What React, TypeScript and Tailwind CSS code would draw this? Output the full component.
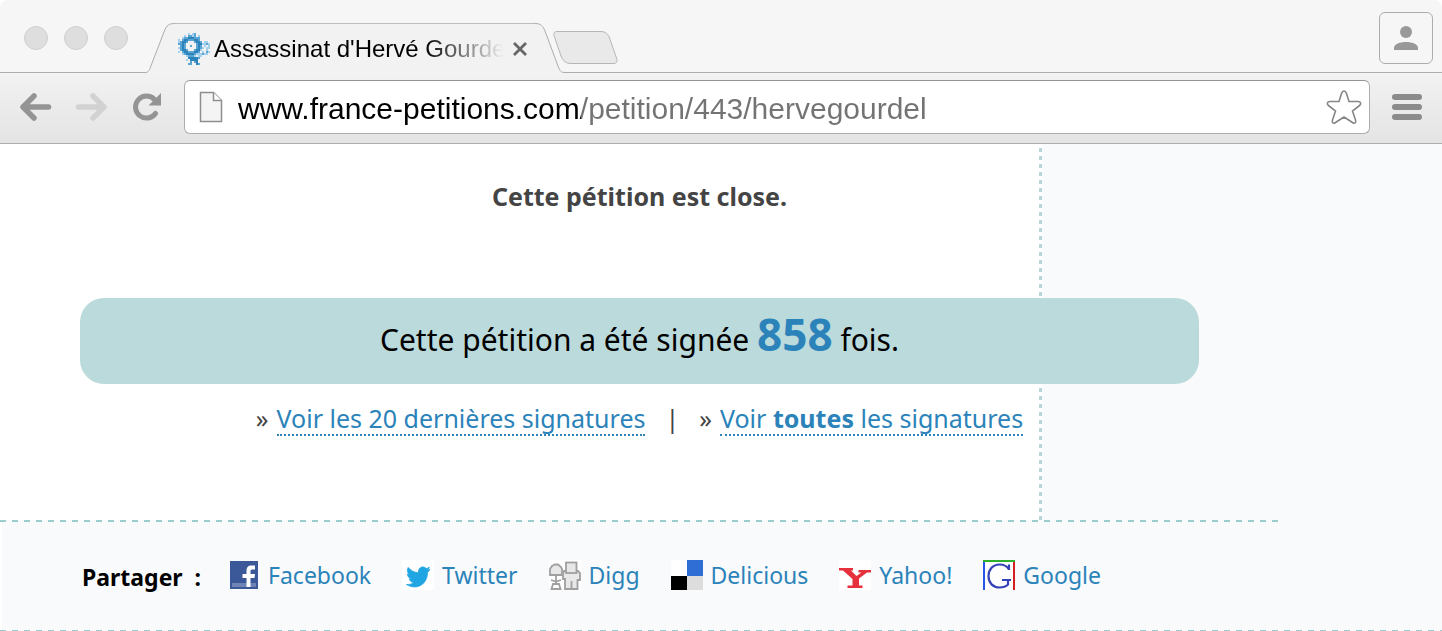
import type { ReactNode } from 'react'

const favicon = [
  '.....a.ab.......',
  '...a.bbab.a.....',
  '..abbcccbbb.....',
  'a.bccbbbccb.....',
  'abccb...bccb.aa.',
  'bbcb.....bccaaba',
  '.bcb..b..bcb.a.a',
  'abcb.....bcba.aa',
  '.bccb...bcca..a.',
  'a.bccbbbccb.a.ba',
  '..abccccbaaabaa.',
  '....abbba.aa....',
  '.....cccccb.....',
  '....a.cccc......',
  '......b.bc......',
  '.....bb..cb.....',
]

const shades: Record<string, string> = { a: '#a3d0ec', b: '#5aa5d3', c: '#2b83ba' }

function Favicon() {
  return (
    <svg viewBox="0 0 16 16" className="size-8 shrink-0" shapeRendering="crispEdges" aria-hidden="true">
      {favicon.flatMap((row, y) =>
        row.split('').map((c, x) =>
          shades[c] ? <rect key={`${x}-${y}`} x={x} y={y} width="1" height="1" fill={shades[c]} /> : null
        )
      )}
    </svg>
  )
}

function TabStrip() {
  return (
    <div className="flex h-[73px] items-end rounded-t-lg border-b border-[#adadad] bg-[#f6f6f6]">
      <div className="flex gap-4 self-start pt-[26px] pl-6">
        {['Fermer', 'Réduire', 'Agrandir'].map((name) => (
          <button key={name} aria-label={name} className="size-6 rounded-full border border-[#cfcfcf] bg-[#dedede]" />
        ))}
      </div>

      <div className="-mb-px ml-[17px] flex h-[50px] shrink-0">
        <svg viewBox="0 0 30 50" className="h-[50px] w-[30px]" aria-hidden="true">
          <path d="M0 50V49.500C3 49.500 4 48 5.500 44L19 9C21.500 2 24 .5 30 .5V50Z" fill="#f2f2f2" />
          <path d="M0 49.500C3 49.500 4 48 5.500 44L19 9C21.500 2 24 .5 30 .5" fill="none" stroke="#adadad" />
        </svg>
        <div className="flex w-[360px] items-center border-t border-[#bdbdbd] bg-[#f2f2f2] pl-[3px]">
          <Favicon />
          <span className="ml-1 w-[294px] text-2xl whitespace-nowrap text-black [mask-image:linear-gradient(to_right,black_210px,transparent_290px)]">
            Assassinat d'Hervé Gourde
          </span>
          <button aria-label="Fermer l'onglet" className="ml-[5px]">
            <svg viewBox="0 0 14 14" className="size-3.5" aria-hidden="true">
              <path d="M1 1L13 13M13 1L1 13" stroke="#666" strokeWidth="2.800" />
            </svg>
          </button>
        </div>
        <svg viewBox="0 0 30 50" className="h-[50px] w-[30px]" aria-hidden="true">
          <path d="M0 .5C6 .5 8 3 10 8L23 43C25 48 26 49.500 30 49.500V50H0Z" fill="#f2f2f2" />
          <path d="M0 .5C6 .5 8 3 10 8L23 43C25 48 26 49.500 30 49.500" fill="none" stroke="#adadad" />
        </svg>
      </div>
      <button aria-label="Nouvel onglet" className="mb-2 -ml-3">
        <svg viewBox="0 0 65 33" className="h-[33px] w-[65px]" aria-hidden="true">
          <path
            d="M4 .5H47C53 .5 55 3 56.500 7L63.500 27C65 30 63.500 32.500 61 32.500H18C13 32.500 10 30 8 25L1.500 6C0 2 1.500 .5 4 .5Z"
            fill="#e9e9e9"
            stroke="#b5b5b5"
          />
        </svg>
      </button>

      <button
        aria-label="Profil"
        className="mr-[9px] mb-2 ml-auto flex h-[52px] w-[54px] items-center justify-center rounded-md border border-[#adadad]"
      >
        <svg viewBox="0 0 24 24" className="size-6" fill="#999" aria-hidden="true">
          <circle cx="12" cy="6" r="6" />
          <path d="M0 24V22C0 18 6 16 12 16S24 18 24 22V24Z" />
        </svg>
      </button>
    </div>
  )
}

function Toolbar() {
  return (
    <div className="flex h-[71px] items-center border-b border-[#adadad] bg-linear-to-b from-[#f2f2f2] to-[#e4e4e4] px-5 pb-0.5">
      <button aria-label="Précédent">
        <svg viewBox="0 0 32 28" className="h-7 w-8" aria-hidden="true">
          <path d="M14 3L3 14L14 25M3.500 14H28.500" fill="none" stroke="#949494" strokeWidth="5.500" strokeLinecap="round" strokeLinejoin="round" />
        </svg>
      </button>
      <button aria-label="Suivant" className="ml-[23px]">
        <svg viewBox="0 0 32 28" className="h-7 w-8" aria-hidden="true">
          <path d="M18 3L29 14L18 25M28.500 14H3.500" fill="none" stroke="#d2d2d2" strokeWidth="5.500" strokeLinecap="round" strokeLinejoin="round" />
        </svg>
      </button>
      <button aria-label="Actualiser" className="ml-[26px]">
        <svg viewBox="0 0 29 28" className="h-7 w-[29px]" aria-hidden="true">
          <path d="M22.500 20.500A11 11 0 1 1 21.500 6.500" fill="none" stroke="#949494" strokeWidth="5" strokeLinecap="round" />
          <path d="M28 0V12.500H15.500Z" fill="#949494" />
        </svg>
      </button>

      <div className="ml-[22px] flex h-[54px] flex-1 items-center rounded-md border border-[#adadad] border-t-[#949494] bg-white pr-[7px] pl-3.5">
        <svg viewBox="0 0 24 32" className="h-8 w-6 shrink-0" aria-hidden="true">
          <path d="M1.500 1.500H14.500L22.500 9.500V30.500H1.500Z" fill="#f4f4f4" stroke="#8e8e8e" strokeWidth="1.500" />
          <path d="M14.500 1.500V9.500H22.500" fill="#fff" stroke="#8e8e8e" strokeWidth="1.500" />
        </svg>
        <input
          type="text"
          aria-label="Adresse"
          defaultValue="www.france-petitions.com/petition/443/hervegourdel"
          className="ml-[15px] min-w-0 flex-1 bg-linear-to-r from-black from-[343px] to-[#737373] to-[343px] bg-clip-text pt-0.5 text-[30px] text-transparent outline-none"
        />
        <button aria-label="Ajouter aux favoris">
          <svg viewBox="0 0 36 36" className="size-9" aria-hidden="true">
            <path
              d="M18 2C19.500 2 20 3 20.500 4.500L23 12.500H32C35 12.500 35.500 15 33.500 16.500L26.500 22L29.500 31C30.500 34 28.500 35 26.500 33.500L18 28L9.500 33.500C7.500 35 5.500 34 6.500 31L9.500 22L2.500 16.500C.5 15 1 12.500 4 12.500H13L15.500 4.500C16 3 16.500 2 18 2Z"
              fill="#fff"
              stroke="#868686"
              strokeWidth="1.600"
            />
          </svg>
        </button>
      </div>

      <button aria-label="Menu" className="ml-[22px] flex flex-col gap-1">
        <span className="h-1.5 w-[30px] rounded-full bg-[#8b8b8b]" />
        <span className="h-1.5 w-[30px] rounded-full bg-[#8b8b8b]" />
        <span className="h-1.5 w-[30px] rounded-full bg-[#8b8b8b]" />
      </button>
    </div>
  )
}

function DottedLink({ children }: { children: ReactNode }) {
  return (
    <a href="#" className="border-b-2 border-dotted border-[#2b83ba] text-[#2b83ba]">
      {children}
    </a>
  )
}

const networks: { name: string; icon: ReactNode }[] = [
  {
    name: 'Facebook',
    icon: (
      <svg viewBox="0 0 28 28" className="mr-0.5 size-7" aria-hidden="true">
        <rect width="28" height="28" fill="#3b5998" />
        <rect x="2" y="22" width="24" height="4" fill="#6d84b4" />
        <path d="M16.500 26V17H12.500V13H16.500V10C16.500 6.500 18 4.500 21.500 4.500H25V8.500H22.500C21 8.500 20.500 9 20.500 10.500V13H25L24.500 17H20.500V26Z" fill="#fff" />
      </svg>
    ),
  },
  {
    name: 'Twitter',
    icon: (
      <svg viewBox="0 0 32 30" className="h-[30px] w-8" aria-hidden="true">
        <rect width="32" height="30" fill="#fff" />
        <path
          transform="translate(3.500 6)"
          d="M24.500 3.200C23.600 3.600 22.700 3.900 21.700 4C22.700 3.400 23.500 2.400 23.800 1.300C22.900 1.900 21.800 2.300 20.700 2.500C17.500-.9 12.300 1.500 13 6.700C8.800 6.500 5.200 4.500 2.700 1.400C1 4.300 2 7 4.200 8.600C3.400 8.500 2.700 8.300 2 8C2 10.500 3.700 12.500 6 13C5.300 13.200 4.500 13.200 3.800 13.100C4.400 15.100 6.200 16.500 8.400 16.500C6.300 18.100 3.900 18.800 1 18.500C10.500 24.500 22 19 22 6.400C23 5.500 23.900 4.500 24.500 3.200Z"
          fill="#1fa5e2"
          stroke="#1fa5e2"
          strokeWidth=".8"
        />
      </svg>
    ),
  },
  {
    name: 'Digg',
    icon: (
      <svg viewBox="0 0 32 30" className="h-[30px] w-8" aria-hidden="true">
        <rect width="32" height="30" fill="#fff" />
        <g fill="#e8e8e8" stroke="#a0a0a0" strokeWidth="1.800">
          <path d="M1 15V9L3 6L6 4.500H9L12 7L13 9V15Z" />
          <path d="M15 11H29L31 13V20H28.500V29H16V19H14V13Z" />
          <rect x="17" y="2.500" width="10.500" height="10.500" />
          <path d="M7 15V23M2 20L7 21.500L12 20" fill="none" />
          <path d="M4 24H10L11.500 29H2.500Z" fill="#fff" />
          <path d="M22.500 21V29" />
        </g>
      </svg>
    ),
  },
  {
    name: 'Delicious',
    icon: (
      <svg viewBox="0 0 32 30" className="h-[30px] w-8" aria-hidden="true">
        <path d="M0 0H16V16H0Z" fill="#fff" />
        <path d="M16 0H32V16H16Z" fill="#2f6fd5" />
        <path d="M0 16H16V30H0Z" fill="#000" />
        <path d="M16 16H32V30H16Z" fill="#ddd" />
      </svg>
    ),
  },
  {
    name: 'Yahoo!',
    icon: (
      <svg viewBox="0 0 32 30" className="h-[30px] w-8" aria-hidden="true">
        <rect width="32" height="30" fill="#fff" />
        <path
          d="M0 8H14V10.500H12L17.500 16L22.500 12.500H19.500V10H32V12.500H28L20 18.500V25.500H23.500V28H8.500V25.500H13.500V19L4 10.500H0Z"
          fill="#e6303b"
        />
      </svg>
    ),
  },
  {
    name: 'Google',
    icon: (
      <svg viewBox="0 0 32 30" className="h-[30px] w-8" aria-hidden="true">
        <rect width="32" height="30" fill="#fff" />
        <path d="M0 0H2V30H0Z" fill="#2456e8" />
        <path d="M0 0H32V2H0Z" fill="#2fae2f" />
        <path d="M30 2H32V30H30Z" fill="#d42020" />
        <path d="M26 10V4.500M26 9.500C24 6 20.500 4.500 16.500 4.500C10 4.500 5.500 9.500 5.500 16C5.500 23 10 27.500 16.500 27.500C20.500 27.500 23 26.500 25 24.500V19M19 20H28" fill="none" stroke="#3543b8" strokeWidth="2.200" />
      </svg>
    ),
  },
]

export default function App() {
  return (
    <div className="min-h-screen bg-white font-['Liberation_Sans',Arial,sans-serif]">
      <header>
        <TabStrip />
        <Toolbar />
      </header>

      <main className="bg-[#f9fafc] font-['Noto_Sans',sans-serif] leading-8 text-[#444]">
        <div className="max-w-[1279px]">
          <section className="grid grid-cols-[1042fr_237fr]">
            {/* white column with its dotted edge, the signature count runs over it */}
            <div className="col-start-1 row-start-1 flex justify-end bg-white">
              <div className="w-[3px] bg-[repeating-linear-gradient(to_bottom,transparent_0_4px,#b5d7da_4px_8px)]" />
            </div>
            <div className="col-span-2 col-start-1 row-start-1 px-20 pt-9 pb-[84px] text-center">
              <p className="text-[25px] leading-8 font-bold">Cette pétition est close.</p>
              <p className="mt-[86px] flex h-[86px] items-center justify-center rounded-3xl bg-[#bbdadb] pb-2 text-[30px] text-black">
                <span>
                  Cette pétition a été signée <strong className="text-[44px] text-[#2b83ba]">858</strong> fois.
                </span>
              </p>
              <p className="mt-[18px] flex items-baseline justify-center text-[25px] leading-8">
                <span className="mr-2">»</span>
                <DottedLink>Voir les 20 dernières signatures</DottedLink>
                <span className="mx-5">|</span>
                <span className="mr-2">»</span>
                <DottedLink>
                  Voir <strong>toutes</strong> les signatures
                </DottedLink>
              </p>
            </div>
          </section>

          <div className="h-0.5 bg-[repeating-linear-gradient(to_right,#9dcccd_0_6px,transparent_6px_12px)]" />
          <section className="flex h-[108px] items-center border-l-2 border-white pb-0.5 pl-20 text-[23px]">
            <h2 className="w-[148px] pt-1 font-bold text-black">Partager&nbsp; :</h2>
            <ul className="flex gap-[31px]">
              {networks.map(({ name, icon }) => (
                <li key={name}>
                  <a href="#" className="flex items-center gap-2 text-[#2b83ba]">
                    {icon}
                    {name}
                  </a>
                </li>
              ))}
            </ul>
          </section>
        </div>
        <div className="h-px bg-[repeating-linear-gradient(to_right,#9dcccd_0_6px,transparent_6px_12px)]" />
      </main>
    </div>
  )
}
